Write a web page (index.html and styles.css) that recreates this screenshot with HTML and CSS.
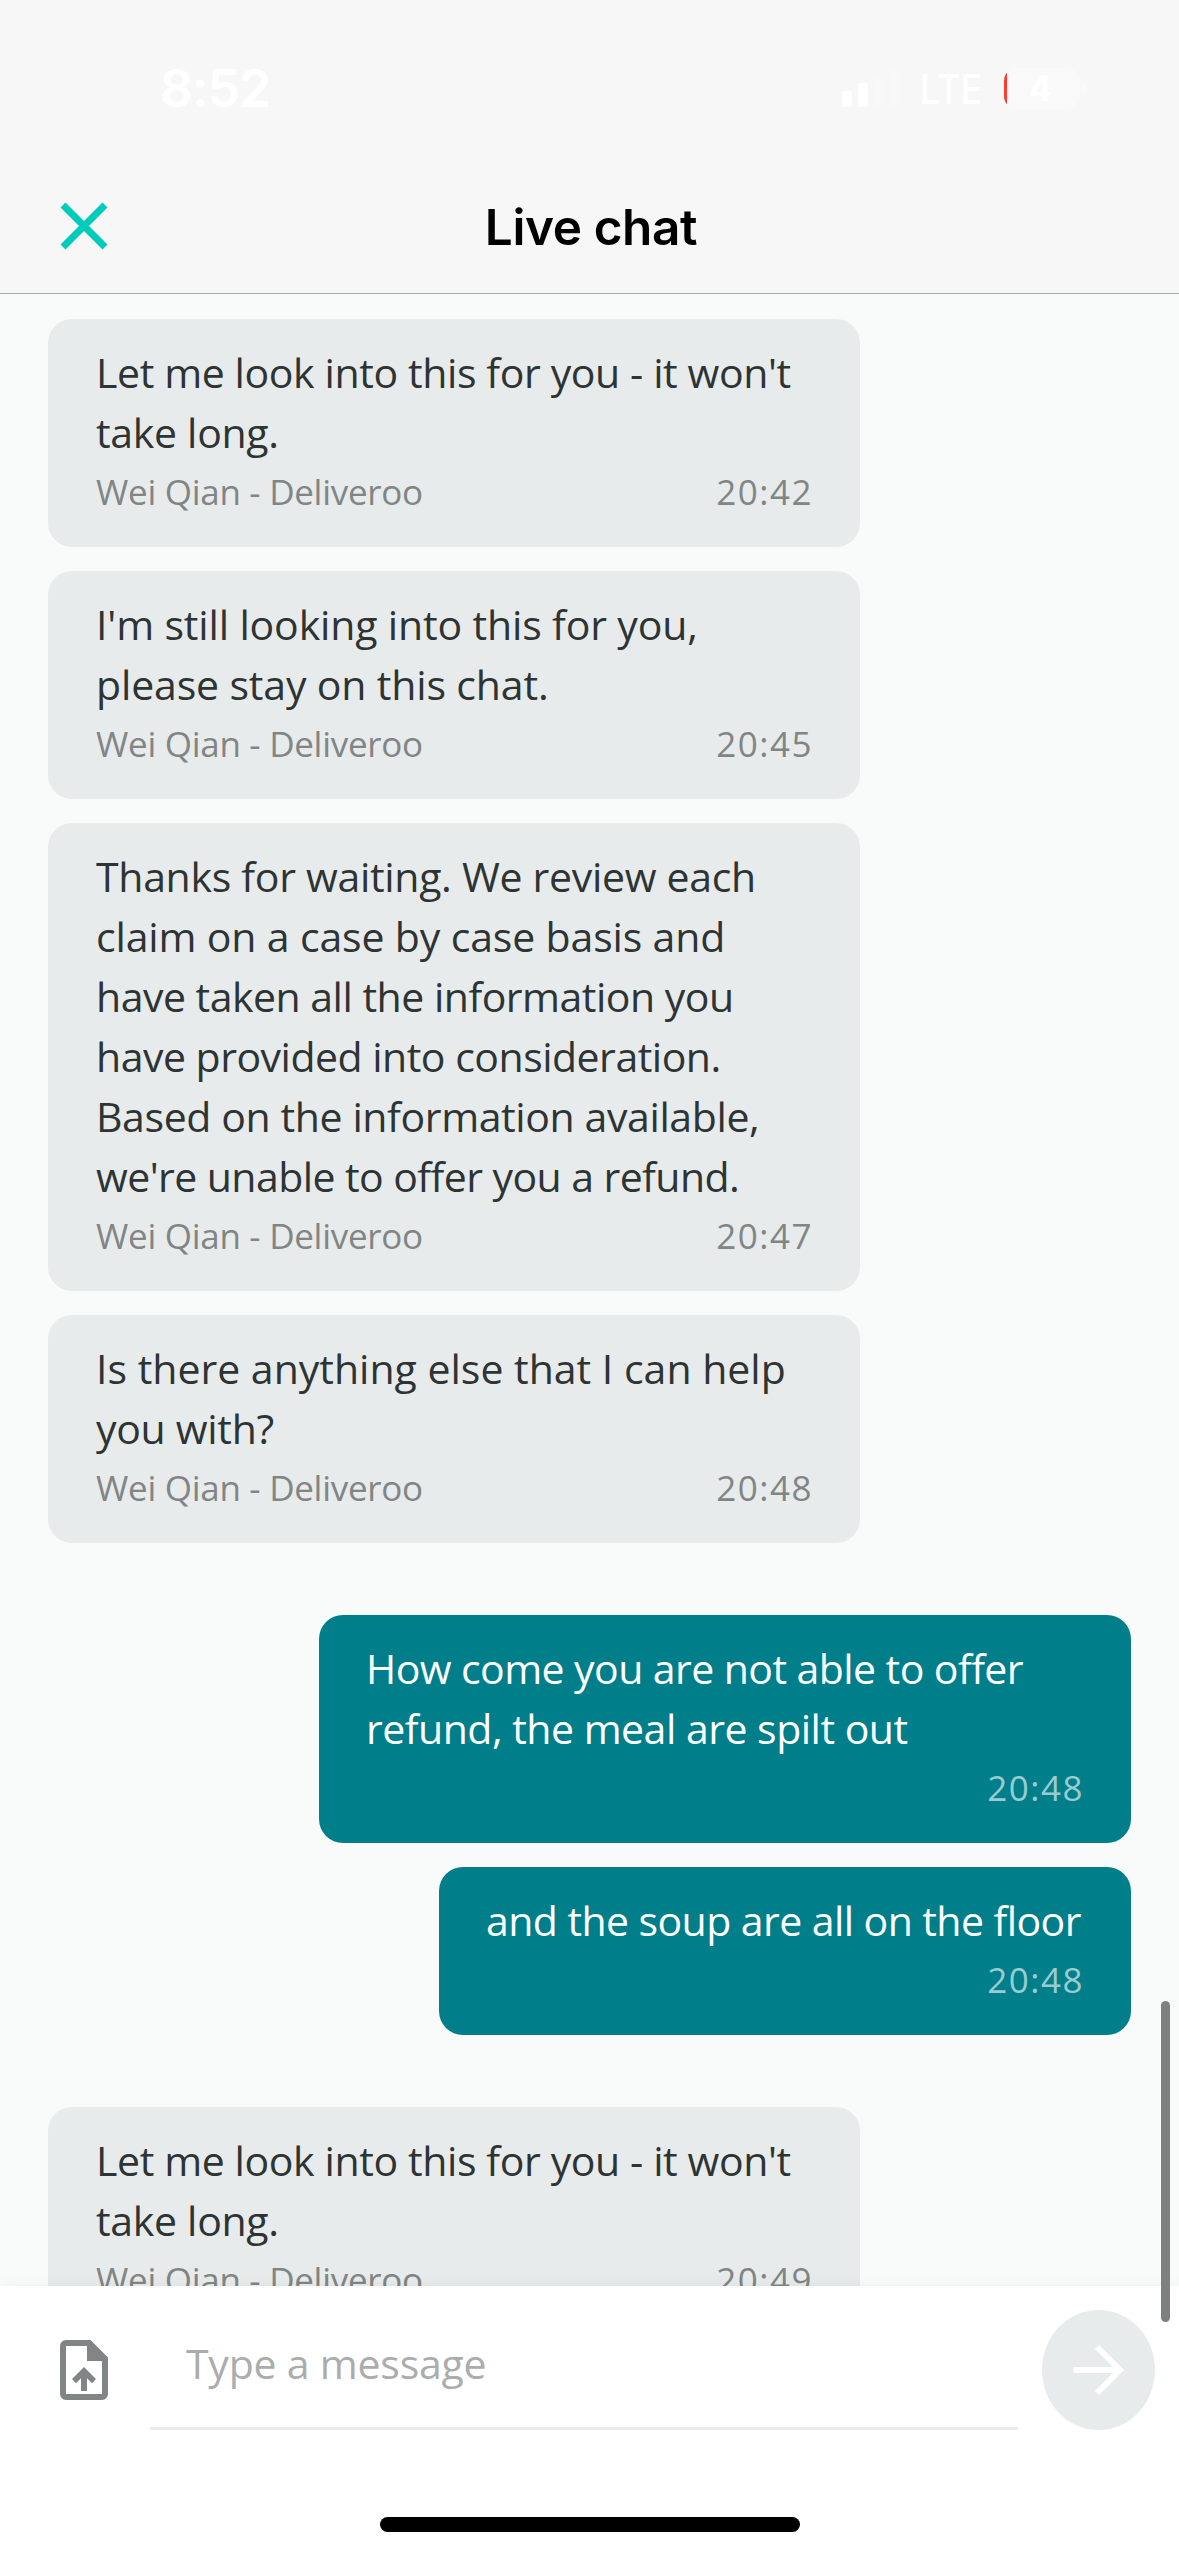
FILE: index.html
```html
<!DOCTYPE html>
<html lang="en">
<head>
<meta charset="utf-8">
<title>Live chat</title>
<link rel="stylesheet" href="styles.css">
</head>
<body>
<div class="screen">
  <header class="header">
    <div class="status-bar">
      <span class="clock">8:52</span>
      <div class="status-right">
        <svg class="signal" width="58" height="38" viewBox="0 0 58 38" fill="#fff">
          <rect x="0" y="22" width="10" height="16" rx="3"/>
          <rect x="16" y="14" width="10" height="24" rx="3"/>
          <rect x="32" y="7" width="10" height="31" rx="3" opacity=".2"/>
          <rect x="48" y="0" width="10" height="38" rx="3" opacity=".2"/>
        </svg>
        <span class="network">LTE</span>
        <div class="battery"><span class="battery-body">4</span><span class="battery-cap"></span></div>
      </div>
    </div>
    <div class="nav">
      <svg class="close" width="48" height="48" viewBox="0 0 48 48" fill="none" stroke="#00ccbc" stroke-width="7"><path d="M3 3 45 45M45 3 3 45"/></svg>
      <h1 class="title">Live chat</h1>
    </div>
  </header>

  <main class="messages">
    <div class="bubble agent">
      <p class="text"><span class="track-c">Let me look into this for you - it won't</span><span class="track-b">take long.</span></p>
      <div class="meta"><span class="name">Wei Qian - Deliveroo</span><span class="time">20:42</span></div>
    </div>
    <div class="bubble agent">
      <p class="text"><span class="track-a">I'm still looking into this for you,</span><span class="track-a">please stay on this chat.</span></p>
      <div class="meta"><span class="name">Wei Qian - Deliveroo</span><span class="time">20:45</span></div>
    </div>
    <div class="bubble agent">
      <p class="text"><span class="track-b">Thanks for waiting. We review each</span><span class="track-a">claim on a case by case basis and</span><span class="track-d">have taken all the information you</span><span class="track-d">have provided into consideration.</span><span class="track-c">Based on the information available,</span><span class="track-e">we're unable to offer you a refund.</span></p>
      <div class="meta"><span class="name">Wei Qian - Deliveroo</span><span class="time">20:47</span></div>
    </div>
    <div class="bubble agent">
      <p class="text"><span>Is there anything else that I can help</span><span class="track-b">you with?</span></p>
      <div class="meta"><span class="name">Wei Qian - Deliveroo</span><span class="time">20:48</span></div>
    </div>
    <div class="bubble customer turn">
      <p class="text"><span class="track-e">How come you are not able to offer</span><span class="track-d">refund, the meal are spilt out</span></p>
      <div class="meta"><span class="time">20:48</span></div>
    </div>
    <div class="bubble customer short">
      <p class="text"><span class="track-e">and the soup are all on the floor</span></p>
      <div class="meta"><span class="time">20:48</span></div>
    </div>
    <div class="bubble agent turn">
      <p class="text"><span class="track-c">Let me look into this for you - it won't</span><span class="track-b">take long.</span></p>
      <div class="meta"><span class="name">Wei Qian - Deliveroo</span><span class="time">20:49</span></div>
    </div>
  </main>

  <footer class="composer">
    <div class="composer-row">
      <svg class="upload" width="48" height="60" viewBox="0 0 48 60" fill="#828585">
        <path fill-rule="evenodd" d="M6 0H30.500L48 17.500V54a6 6 0 0 1-6 6H6a6 6 0 0 1-6-6V6a6 6 0 0 1 6-6ZM6 6V54H42V21H27V6Z"/>
        <path d="M24 27 36 39 32 43.200 27 38.300V51H21V38.300L16 43.200 12 39Z"/>
      </svg>
      <div class="input">Type a message</div>
      <div class="send">
        <svg width="52" height="52" viewBox="0 0 52 52" fill="none" stroke="#fff" stroke-width="6"><path d="M.5 26H45M24 3 47 26 24 49"/></svg>
      </div>
    </div>
    <div class="home-indicator"></div>
  </footer>
  <div class="scrollbar"></div>
</div>
</body>
</html>
```
FILE: styles.css
```css
* { box-sizing: border-box; }
body { margin: 0; }
.screen {
  position: relative;
  display: flex;
  flex-direction: column;
  width: 1179px;
  height: 2556px;
  overflow: hidden;
  background: #f9fbfa;
  font-family: "Open Sans", sans-serif;
}

/* header */
.header {
  flex: none;
  height: 294px;
  background: #f7f7f7;
  border-bottom: 1px solid #a9adac;
  font-family: Inter, sans-serif;
}
.status-bar {
  display: flex;
  align-items: center;
  justify-content: space-between;
  height: 176px;
  padding: 0 93px 0 160px;
  color: #fff;
}
.clock { margin-top: 2px; font-size: 52px; font-weight: 600; line-height: 60px; letter-spacing: -1.2px; }
.status-right { display: flex; align-items: center; }
.signal { margin-right: 20px; }
.network {
  width: 70px;
  font-size: 41px;
  font-weight: 500;
  line-height: 50px;
  transform: scaleX(.88);
  transform-origin: left;
  margin-top: 2px;
}
.battery { display: flex; align-items: center; gap: 2px; margin-left: 14px; }
.battery-body {
  width: 76px;
  height: 41px;
  padding-right: 3px;
  border-radius: 13px;
  background: linear-gradient(90deg, #ff3b30 3px, #f9f9f9 3px);
  font-size: 35px;
  font-weight: 700;
  line-height: 41px;
  text-align: center;
}
.battery-cap { width: 4px; height: 13px; border-radius: 0 4px 4px 0; background: #f9f9f9; }
.nav {
  display: grid;
  grid-template-columns: 120px 1fr 120px;
  align-items: center;
  height: 100px;
}
.close { margin-left: 60px; }
.title {
  margin: 1px 0 0;
  padding-left: 3px;
  text-align: center;
  color: #000;
  font-size: 49.5px;
  font-weight: 600;
  line-height: 60px;
  letter-spacing: -.4px;
}

/* conversation */
.messages {
  flex: 1;
  min-height: 0;
  overflow: hidden;
  display: flex;
  flex-direction: column;
  gap: 24px;
  padding: 25px 48px 0;
}
.bubble {
  flex: none;
  width: 812px;
  padding: 23px 48px 25px;
  border-radius: 24px;
}
.agent { align-self: flex-start; background: #e7ebeb; color: #2e3333; }
.customer { align-self: flex-end; padding-left: 47px; background: #007e8a; color: #fff; }
.short { width: 692px; }
.turn { margin-top: 48px; }
.text { margin: 0; font-size: 41px; line-height: 60px; white-space: nowrap; }
.text span { display: block; }
.meta { display: flex; font-size: 35px; line-height: 60px; color: #828585; white-space: nowrap; }
.name { letter-spacing: -.29px; }
.time { margin-left: auto; margin-right: -1px; letter-spacing: 1.5px; }
.customer .meta { color: #99cbd0; }

.track-a { letter-spacing: -.15px; }
.track-b { letter-spacing: -.3px; }
.track-c { letter-spacing: -.39px; }
.track-d { letter-spacing: -.5px; }
.track-e { letter-spacing: -.57px; }

/* composer */
.composer {
  flex: none;
  display: flex;
  flex-direction: column;
  align-items: center;
  height: 270px;
  padding-top: 24px;
  background: #fff;
  box-shadow: 0 0 14px rgba(0, 0, 0, .05);
}
.composer-row {
  display: flex;
  align-items: center;
  width: 100%;
  height: 120px;
  padding: 0 24px 0 60px;
}
.input {
  width: 868px;
  height: 120px;
  margin: 0 24px 0 42px;
  padding: 23px 36px 0;
  border-bottom: 3px solid #ebebeb;
  color: #abadad;
  font-size: 41px;
  line-height: 60px;
  letter-spacing: -.22px;
}
.send {
  display: flex;
  align-items: center;
  justify-content: center;
  width: 113px;
  height: 120px;
  border-radius: 50%;
  background: #e7ebeb;
}
.home-indicator { width: 420px; height: 15px; margin-top: 87px; border-radius: 8px; background: #000; }
.scrollbar {
  position: absolute;
  right: 9px;
  top: 2001px;
  width: 9px;
  height: 321px;
  border-radius: 5px;
  background: #7e7f7f;
}
```
